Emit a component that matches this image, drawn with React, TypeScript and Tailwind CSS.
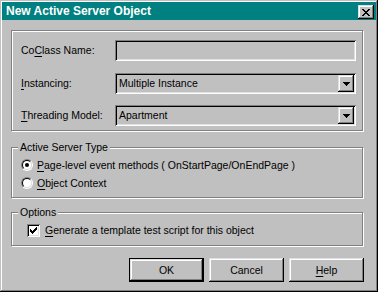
const raised =
  'shadow-[inset_-1px_-1px_#000,inset_1px_1px_#dfdfdf,inset_-2px_-2px_#808080,inset_2px_2px_#fff]';
const sunken =
  'shadow-[inset_1px_1px_#808080,inset_-1px_-1px_#fff,inset_2px_2px_#000,inset_-2px_-2px_#dfdfdf]';
const etched = 'border border-[#808080] shadow-[inset_1px_1px_#fff,1px_1px_#fff]';

function Key({ children }: { children: string }) {
  return <span className="underline underline-offset-[2px]">{children}</span>;
}

function DropArrow() {
  return (
    <svg width="7" height="4" viewBox="0 0 7 4" shapeRendering="crispEdges">
      <path d="M0 0h7v1H0zM1 1h5v1H1zM2 2h3v1H2zM3 3h1v1H3z" fill="#000" />
    </svg>
  );
}

function Combo({ value }: { value: string }) {
  return (
    <div className={`w-[241px] h-[21px] bg-[#c0c0c0] ${sunken} flex items-center pl-[4px] pr-[2px]`}>
      <span className="flex-1">{value}</span>
      <div className={`w-[16px] h-[17px] bg-[#c0c0c0] ${raised} flex items-center justify-center`}>
        <DropArrow />
      </div>
    </div>
  );
}

function Radio({ checked }: { checked?: boolean }) {
  return (
    <div className="w-[12px] h-[12px] rounded-full border border-[#808080] border-r-white border-b-white">
      <div className="w-full h-full rounded-full border border-black border-r-[#dfdfdf] border-b-[#dfdfdf] bg-white flex items-center justify-center">
        {checked && <div className="w-[4px] h-[4px] rounded-full bg-black" />}
      </div>
    </div>
  );
}

function Check() {
  return (
    <div className={`w-[13px] h-[13px] bg-white ${sunken} flex items-center justify-center`}>
      <svg width="7" height="7" viewBox="0 0 7 7" shapeRendering="crispEdges">
        <path d="M6 0h1v1H6zM5 1h2v1H5zM0 2h1v1H0zM4 2h3v1H4zM0 3h2v1H0zM3 3h3v1H3zM0 4h5v1H0zM1 5h3v1H1zM2 6h1v1H2z" fill="#000" />
      </svg>
    </div>
  );
}

function Button({ children, isDefault }: { children: React.ReactNode; isDefault?: boolean }) {
  return (
    <div className={`w-[75px] h-[24px] bg-[#c0c0c0] ${isDefault ? 'border border-black' : ''}`}>
      <div className={`w-full h-full ${raised} flex items-center justify-center`}>{children}</div>
    </div>
  );
}

export default function App() {
  return (
    <div
      className={`w-[378px] h-[292px] bg-[#c0c0c0] p-[2px] text-[10.5px] leading-[13px] text-black shadow-[inset_-1px_-1px_#000,inset_1px_1px_#c0c0c0,inset_-2px_-2px_#808080,inset_2px_2px_#fff]`}
      style={{ fontFamily: '"Liberation Sans", Arial, sans-serif' }}
    >
      {/* title bar */}
      <div className="h-[18px] bg-[#008080] flex items-center justify-between pl-[4px] pr-[2px]">
        <span className="text-white font-bold text-[12px]">New Active Server Object</span>
        <div className={`w-[16px] h-[14px] mt-[2px] bg-[#c0c0c0] ${raised} flex items-center justify-center`}>
          <svg width="8" height="7" viewBox="0 0 8 7" shapeRendering="crispEdges">
            <path d="M0 0h2v1H0zM6 0h2v1H6zM1 1h2v1H1zM5 1h2v1H5zM2 2h4v1H2zM3 3h2v1H3zM2 4h4v1H2zM1 5h2v1H1zM5 5h2v1H5zM0 6h2v1H0zM6 6h2v1H6z" fill="#000" />
          </svg>
        </div>
      </div>

      <div className="pl-[9px] pt-[10px]">
        {/* properties */}
        <div className={`w-[352px] h-[101px] ${etched} pt-[9px] pl-[9px]`}>
          <div className="flex items-center h-[21px]">
            <span className="w-[94px]">
              Co<Key>C</Key>lass Name:
            </span>
            <div className={`w-[241px] h-[21px] bg-[#c0c0c0] ${sunken}`} />
          </div>
          <div className="flex items-center h-[21px] mt-[12px]">
            <span className="w-[94px]">
              <Key>I</Key>nstancing:
            </span>
            <Combo value="Multiple Instance" />
          </div>
          <div className="flex items-center h-[21px] mt-[11px]">
            <span className="w-[94px]">
              <Key>T</Key>hreading Model:
            </span>
            <Combo value="Apartment" />
          </div>
        </div>

        {/* server type */}
        <div className={`relative w-[352px] h-[51px] mt-[16px] ${etched} pt-[8px] pl-[9px]`}>
          <span className="absolute -top-[7px] left-[6px] px-[2px] bg-[#c0c0c0]">Active Server Type</span>
          <div className="flex items-center h-[18px] gap-[4px]">
            <Radio checked />
            <span>
              <Key>P</Key>age-level event methods ( OnStartPage/OnEndPage )
            </span>
          </div>
          <div className="flex items-center h-[18px] gap-[4px]">
            <Radio />
            <span>
              <Key>O</Key>bject Context
            </span>
          </div>
        </div>

        {/* options */}
        <div className={`relative w-[352px] h-[34px] mt-[14px] ${etched} pt-[9px] pl-[15px]`}>
          <span className="absolute -top-[7px] left-[6px] px-[2px] bg-[#c0c0c0]">Options</span>
          <div className="flex items-center h-[17px] gap-[5px]">
            <Check />
            <span>
              <Key>G</Key>enerate a template test script for this object
            </span>
          </div>
        </div>

        {/* buttons */}
        <div className="flex gap-[5px] mt-[12px] pl-[118px]">
          <Button isDefault>OK</Button>
          <Button>Cancel</Button>
          <Button>
            <span>
              <Key>H</Key>elp
            </span>
          </Button>
        </div>
      </div>
    </div>
  );
}
